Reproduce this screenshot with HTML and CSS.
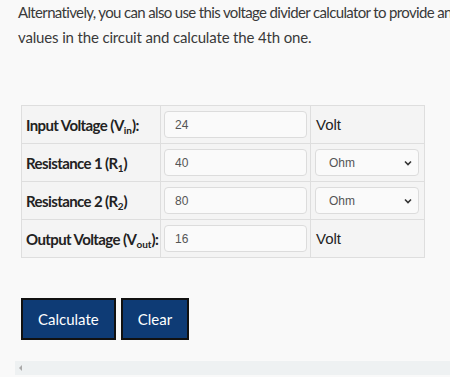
FILE: index.html
```
<html>
<head>
<meta name="viewport" content="width=device-width, initial-scale=1" />
<title>Voltage divider calculator</title>
<link rel="stylesheet" href="styles.css">
</head>
<body>
<div class="page">
<p class="intro"><span class="l1">Alternatively, you can also use this voltage divider calculator to provide any 3</span><br><span class="l2">values in the circuit and calculate the 4th one.</span></p>

<table class="calc">
    <tr>
        <td class="label">Input Voltage (V<sub>in</sub>):</td>
        <td><input class="num" type="text" value="24"></td>
        <td class="unit">Volt</td>
    </tr>
    <tr>
        <td class="label">Resistance 1 (R<sub>1</sub>)</td>
        <td><input class="num" type="text" value="40"></td>
        <td>
            <div class="pickwrap">
                <select class="pick"><option>Ohm</option></select>
                <svg class="chev" width="8" height="6" viewBox="0 0 8 6"><path d="M1 1.5 L4 4.5 L7 1.5" fill="none" stroke="#333" stroke-width="1.6"/></svg>
            </div>
        </td>
    </tr>
    <tr>
        <td class="label">Resistance 2 (R<sub>2</sub>)</td>
        <td><input class="num" type="text" value="80"></td>
        <td>
            <div class="pickwrap">
                <select class="pick"><option>Ohm</option></select>
                <svg class="chev" width="8" height="6" viewBox="0 0 8 6"><path d="M1 1.5 L4 4.5 L7 1.5" fill="none" stroke="#333" stroke-width="1.6"/></svg>
            </div>
        </td>
    </tr>
    <tr>
        <td class="label">Output Voltage (V<sub>out</sub>):</td>
        <td><input class="num" type="text" value="16"></td>
        <td class="unit">Volt</td>
    </tr>
</table>

<div class="actions">
    <button class="btn">Calculate</button>
    <button class="btn">Clear</button>
</div>

<div class="hscroll"><span class="arrow"></span></div>
</div>
</body>
</html>
```
FILE: styles.css
```
html, body { margin: 0; background: #f9f9f9; overflow: hidden; }
.page { padding: 0 0 0 18px; width: 600px; }
.intro { margin: 0; font-family: Lato, sans-serif; font-size: 15px; line-height: 25px; color: #3a3a3a; white-space: nowrap; }
.intro .l1 { letter-spacing: -0.65px; }
.intro .l2 { letter-spacing: -0.15px; }

.calc { margin: 55px 0 0 3px; border-collapse: collapse; table-layout: fixed; width: 403px; background: #f4f4f4; font-family: Lato, sans-serif; }
.calc td { border: 1px solid #dedede; padding: 0 3px; height: 38px; white-space: nowrap; }
.calc td.label { width: 131px; padding-left: 4px; font-size: 15px; font-weight: bold; color: #222; letter-spacing: -0.6px; overflow: visible; }
.calc td:nth-child(2) { width: 143px; }
.calc td:nth-child(3) { width: 105px; padding: 0 3px 0 4px; }
.calc sub { font-size: 10px; vertical-align: -3px; line-height: 0; letter-spacing: 0; }
.calc td.unit { font-family: "Liberation Sans", Arial, sans-serif; font-size: 15px; color: #222; padding-left: 5px; }

.num { display: block; box-sizing: border-box; width: 143px; height: 27px; border: 1px solid #dcdcdc; border-radius: 4px; background: #fafafa; padding: 0 10px; font-family: "Liberation Sans", Arial, sans-serif; font-size: 12px; color: #555; }
.pickwrap { position: relative; width: 104px; }
.pick { display: block; box-sizing: border-box; width: 104px; height: 27px; border: 1px solid #dcdcdc; border-radius: 4px; background: #fafafa; padding: 0 0 0 13px; font-family: "Liberation Sans", Arial, sans-serif; font-size: 12px; color: #555; appearance: none; -webkit-appearance: none; }
.chev { position: absolute; right: 7px; top: 11px; pointer-events: none; }

.actions { display: flex; gap: 5px; margin: 40px 0 0 3px; }
.btn { box-sizing: border-box; height: 42px; border: 2px solid #111; background: #0e3b75; color: #fff; font-family: Lato, sans-serif; font-size: 15px; padding: 0 15px; }

.hscroll { margin: 21px 0 0 -3px; height: 14px; width: 450px; background: #eef1f2; display: flex; align-items: center; }
.arrow { margin-left: 4px; width: 0; height: 0; border-top: 3px solid transparent; border-bottom: 3px solid transparent; border-right: 3px solid #aaa; }
```
